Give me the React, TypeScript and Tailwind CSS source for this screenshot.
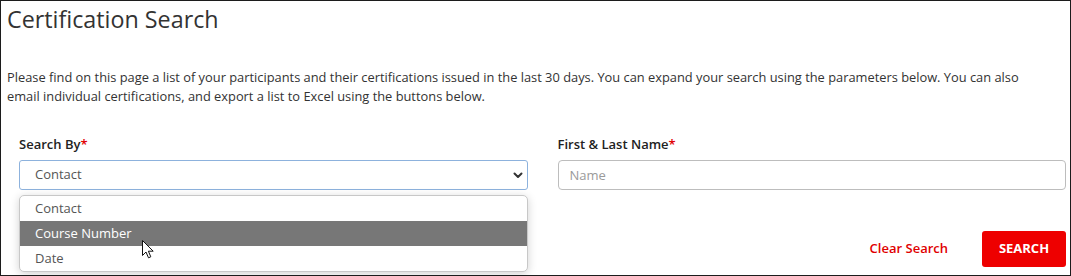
import React from 'react'

const font = { fontFamily: '"Open Sans", "Liberation Sans", sans-serif' }

const Chevron: React.FC = () => (
  <svg width="10" height="7" viewBox="0 0 10 7" className="text-[#333]">
    <path d="M1.5 1.5 L5 5 L8.5 1.5" fill="none" stroke="currentColor" strokeWidth="2" strokeLinecap="round" strokeLinejoin="round" />
  </svg>
)

const Cursor: React.FC = () => (
  <svg width="12" height="19" viewBox="0 0 12 19" className="absolute left-[122px] top-[19px] z-20">
    <path
      d="M0.5 0.5 L0.5 15.5 L4 12 L6.5 17.8 L8.8 16.8 L6.4 11.2 L11.2 11.2 Z"
      fill="#fff"
      stroke="#111"
      strokeWidth="1"
      strokeLinejoin="round"
    />
  </svg>
)

export default function App() {
  const options = ['Contact', 'Course Number', 'Date']

  return (
    <div
      className="w-[1071px] h-[276px] border border-[#1c1c1c] bg-white text-[#333] overflow-hidden box-border"
      style={font}
    >
      {/* Header */}
      <div className="pl-[6px] pt-[3px]">
        <h1 className="text-[23.3px] leading-[30px] font-normal text-[#333]">Certification Search</h1>
        <p className="mt-[34px] text-[12.85px] leading-[19px] text-[#333]">
          Please find on this page a list of your participants and their certifications issued in the last 30 days. You can expand your search using the parameters below. You can also
          <br />
          email individual certifications, and export a list to Excel using the buttons below.
        </p>
      </div>

      {/* Form */}
      <div className="pl-[18px] pr-[4px] mt-[29px]">
        <div className="grid grid-cols-2 gap-[30px]">
          <div className="relative">
            <label className="block text-[13px] leading-[19px] font-semibold text-[#222]">
              Search By<span className="text-[#e00000]">*</span>
            </label>
            <div className="mt-[6px] h-[30px] flex items-center justify-between border border-[#8db2dd] rounded-[3px] pl-[15px] pr-[4px] text-[13px] text-[#555]">
              <span>Contact</span>
              <Chevron />
            </div>

            {/* Open dropdown */}
            <div className="absolute left-0 right-0 top-[60px] z-10 bg-white border border-[#c8c8c8] rounded-[5px] shadow-[0_2px_10px_rgba(0,0,0,0.18)]">
              {options.map((opt, i) => (
                <div
                  key={opt}
                  className={
                    i === 1
                      ? 'relative h-[25px] flex items-center pl-[15px] text-[13px] bg-[#777777] text-white'
                      : 'h-[25px] flex items-center pl-[15px] text-[13px] text-[#555]'
                  }
                >
                  {opt}
                  {i === 1 && <Cursor />}
                </div>
              ))}
            </div>
          </div>

          <div>
            <label className="block text-[13px] leading-[19px] font-semibold text-[#222]">
              First &amp; Last Name<span className="text-[#e00000]">*</span>
            </label>
            <input
              placeholder="Name"
              className="mt-[6px] w-full h-[30px] border border-[#bdbdbd] rounded-[4px] pl-[11px] text-[13px] text-[#555] placeholder:text-[#9a9a9a] outline-none"
              style={font}
            />
          </div>
        </div>

        {/* Actions */}
        <div className="mt-[41px] flex items-center justify-end gap-[34px]">
          <button className="text-[13px] font-semibold text-[#e00000]" style={font}>
            Clear Search
          </button>
          <button
            className="w-[84px] h-[36px] rounded-[3px] bg-[#ee0000] text-white text-[13px] font-bold"
            style={font}
          >
            SEARCH
          </button>
        </div>
      </div>
    </div>
  )
}
